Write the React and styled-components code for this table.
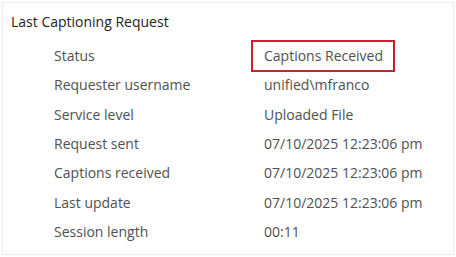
import React from 'react'
import styled, { createGlobalStyle } from 'styled-components'

const GlobalStyle = createGlobalStyle`
  html, body {
    margin: 0;
    padding: 0;
    background: #fff;
  }
  body {
    font-family: "Open Sans", "Noto Sans", sans-serif;
  }
`;

const Page = styled.div`
  width: 456px;
  height: 257px;
  padding: 2px;
  box-sizing: border-box;
`;

const Panel = styled.section`
  height: 100%;
  box-sizing: border-box;
  border: 1px solid #ececec;
  background: #fff;
`;

const Title = styled.h2`
  margin: 0;
  height: 36px;
  box-sizing: border-box;
  display: flex;
  align-items: center;
  padding: 1px 0 0 8px;
  font-size: 14px;
  font-weight: 400;
  color: #222;
`;

const Rows = styled.div`
  display: flex;
  flex-direction: column;
  padding-top: 2px;
`;

const Row = styled.div`
  display: flex;
  align-items: center;
  height: 29.3px;
`;

const Label = styled.span`
  width: 210px;
  padding-left: 51px;
  box-sizing: content-box;
  flex: none;
  font-size: 14px;
  color: #505050;
`;

const Value = styled.span`
  font-size: 14px;
  color: #505050;
  white-space: nowrap;
  ${(props) =>
    props.highlight &&
    `
    display: inline-flex;
    align-items: center;
    height: 32px;
    box-sizing: border-box;
    margin-left: -13px;
    padding: 0 10px 0 11px;
    border: 2px solid #c8232c;
  `}
`;

const details = [
  { label: 'Status', value: 'Captions Received', highlight: true },
  { label: 'Requester username', value: 'unified\\mfranco' },
  { label: 'Service level', value: 'Uploaded File' },
  { label: 'Request sent', value: '07/10/2025 12:23:06 pm' },
  { label: 'Captions received', value: '07/10/2025 12:23:06 pm' },
  { label: 'Last update', value: '07/10/2025 12:23:06 pm' },
  { label: 'Session length', value: '00:11' },
];

const App = () => {
  return (
    <Page>
      <GlobalStyle />
      <Panel>
        <Title>Last Captioning Request</Title>
        <Rows>
          {details.map((d) => (
            <Row key={d.label}>
              <Label>{d.label}</Label>
              <Value highlight={d.highlight}>{d.value}</Value>
            </Row>
          ))}
        </Rows>
      </Panel>
    </Page>
  )
}

export default App
